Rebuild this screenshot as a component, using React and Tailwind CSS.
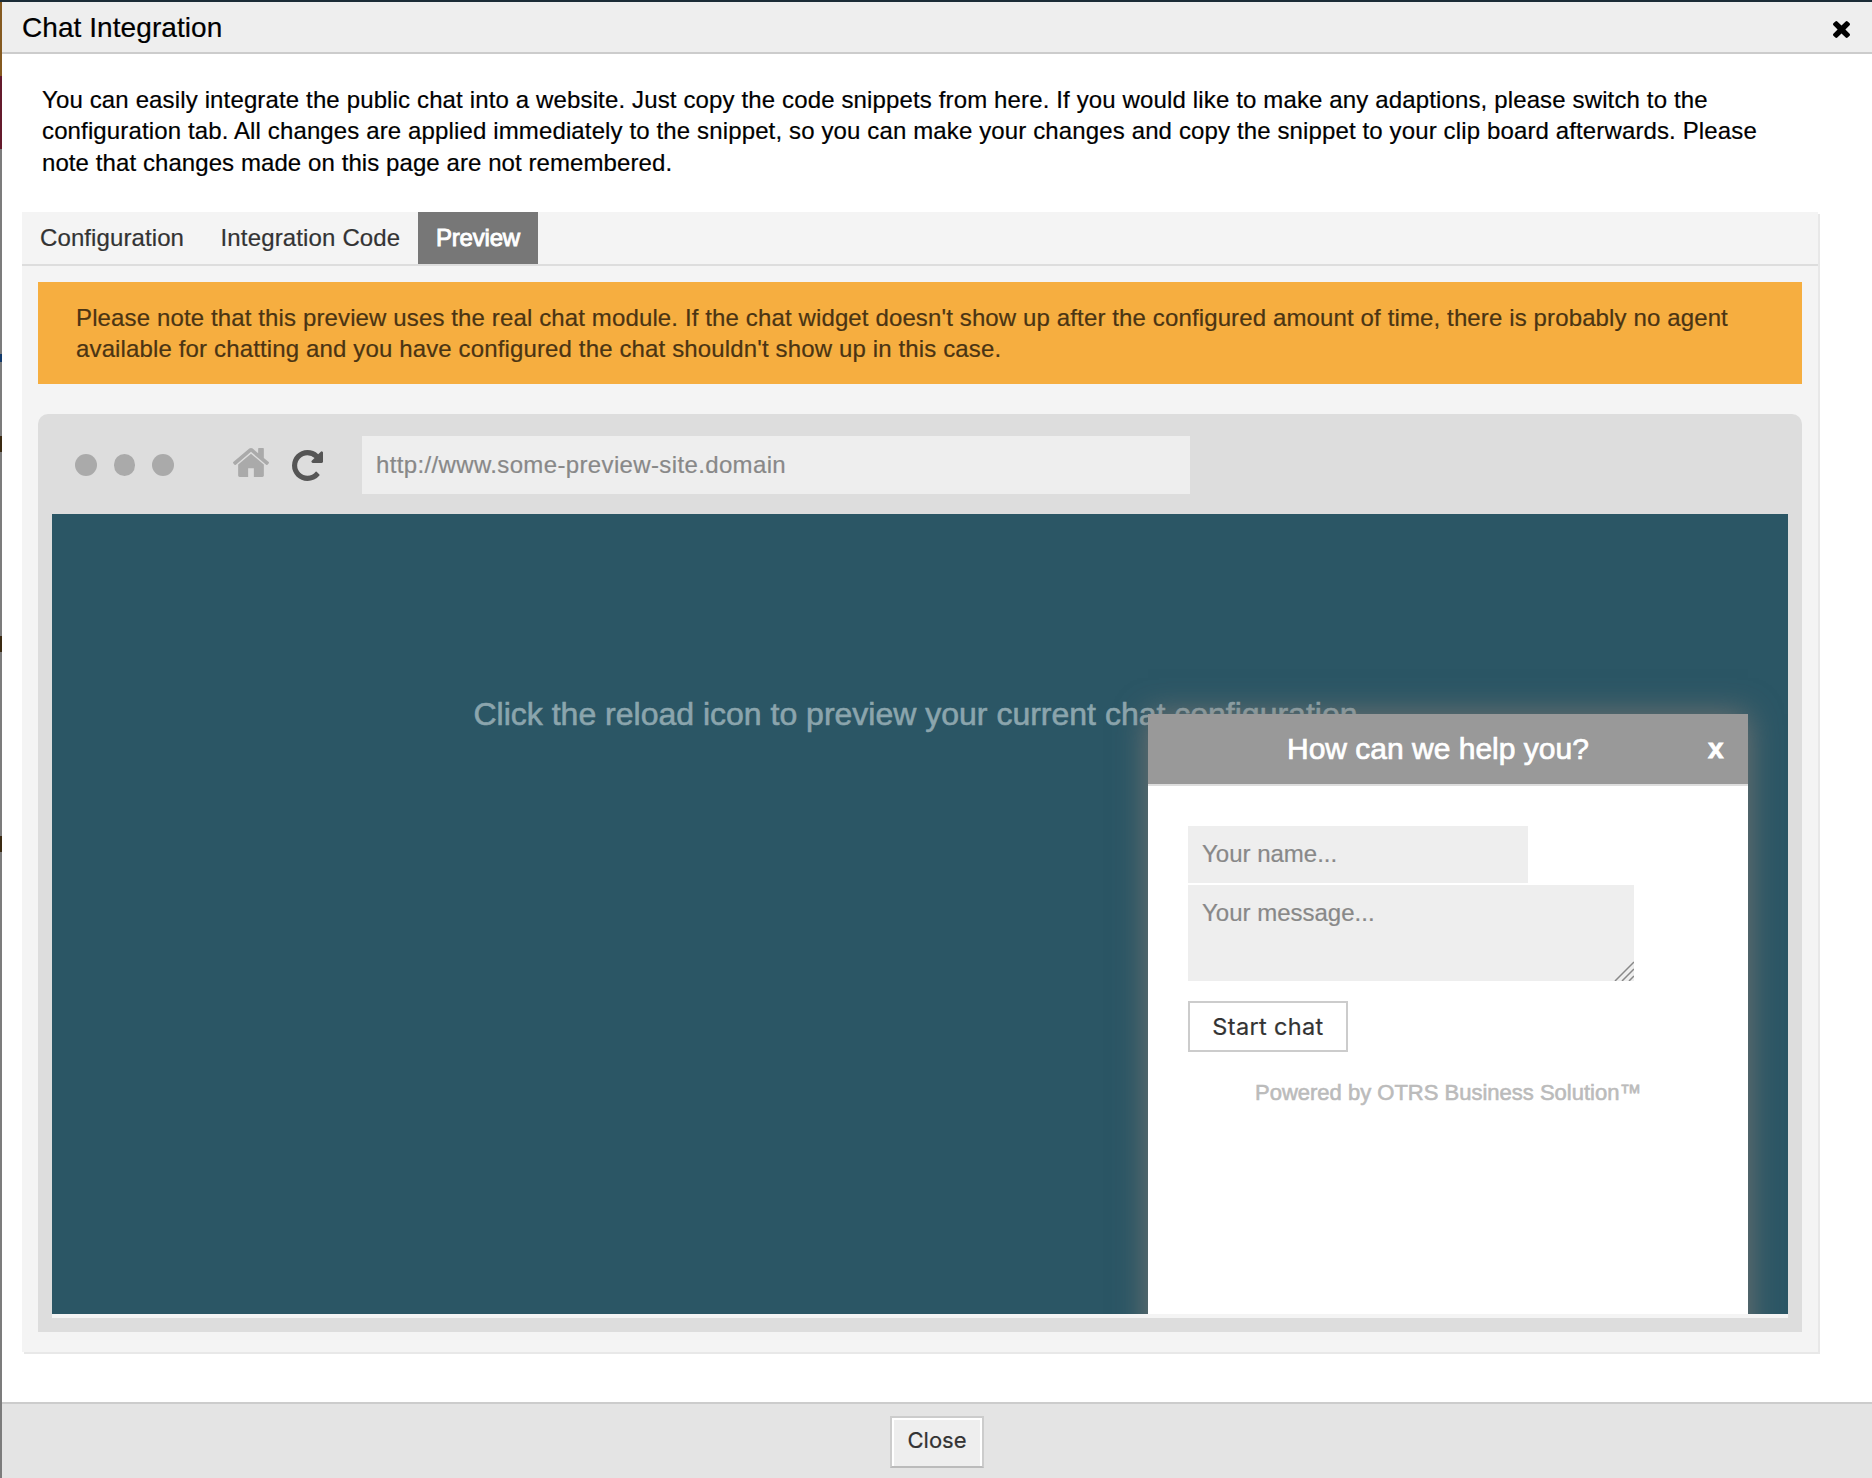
import React from "react";

const TimesIcon = () => (
  <svg className="h-[17px] w-[17px]" viewBox="302 366 1188 1188" fill="currentColor">
    <path d="M1490 1322q0 40-28 68l-136 136q-28 28-68 28t-68-28l-294-294-294 294q-28 28-68 28t-68-28l-136-136q-28-28-28-68t28-68l294-294-294-294q-28-28-28-68t28-68l136-136q28-28 68-28t68 28l294 294 294-294q28-28 68-28t68 28l136 136q28 28 28 68t-28 68l-294 294 294 294q28 28 28 68z" />
  </svg>
);

const HomeIcon = () => (
  <svg className="-mt-[5px] h-[29px] w-9" viewBox="25 253 1614 1284" preserveAspectRatio="none" fill="#aaa">
    <path d="M1408 992v480q0 26-19 45t-45 19h-384v-384h-256v384h-384q-26 0-45-19t-19-45v-480q0-1 .5-3t.5-3l575-474 575 474q1 2 1 6zm223-69l-62 74q-8 9-21 11h-3q-13 0-21-7l-692-577-692 577q-12 8-24 7-13-2-21-11l-62-74q-8-10-7-23.5t11-21.5l719-599q32-26 76-26t76 26l244 204v-195q0-14 9-23t23-9h192q14 0 23 9t9 23v408l219 182q10 8 11 21.5t-7 23.5z" />
  </svg>
);

const ReloadIcon = () => (
  <svg className="h-[31px] w-[31px]" viewBox="128 128 1536 1536" fill="#555">
    <path d="M1664 256v448q0 26-19 45t-45 19h-448q-42 0-59-40-17-39 14-69l138-138q-148-137-349-137-104 0-198.5 40.5t-163.5 109.5-109.5 163.5-40.5 198.5 40.5 198.5 109.5 163.5 163.5 109.5 198.5 40.5q119 0 225-52t179-147q7-10 23-12 15 0 25 9l137 138q9 8 9.5 20.5t-7.5 22.5q-109 132-264 204.5t-327 72.5q-156 0-298-61t-245-164-164-245-61-298 61-298 164-245 245-164 298-61q147 0 284.5 55.5t244.5 156.5l130-129q29-31 70-14 39 17 39 59z" />
  </svg>
);

const ChatWidget = () => (
  <div className="absolute top-[200px] right-10 h-[640px] w-[600px] bg-white shadow-[0_0_30px_rgba(140,125,118,0.75)]">
    <div className="flex h-[72px] items-center border-b-2 border-[#ddd] bg-[#999] text-white">
      <h2 className="ml-[139px] w-[420px] text-[30px] leading-none whitespace-nowrap [-webkit-text-stroke:0.7px_white]">How can we help you?</h2>
      <button className="ml-px text-[28px] leading-none font-bold [-webkit-text-stroke:0.8px_white]">x</button>
    </div>
    <form className="flex flex-col items-start px-10 pt-10 text-2xl text-[#888]">
      <div className="h-[57px] w-[340px] bg-[#eee] pt-3 pl-3.5">Your name...</div>
      <div className="relative mt-0.5 h-24 w-[446px] bg-[#eee] pt-3 pl-3.5">
        Your message...
        <svg className="absolute right-0 bottom-0 h-5 w-5" viewBox="0 0 20 20" stroke="#888" strokeWidth="1.5">
          <path d="M1 20L20 1M8 20L20 8M15 20L20 15" />
        </svg>
      </div>
      <button type="button" className="mt-5 h-[51px] w-40 border-2 border-[#ccc] bg-white pt-px font-['Inter'] text-[23.5px] tracking-[0.35px] text-[#333]">Start chat</button>
      <p className="mt-[26px] ml-[67px] text-[22px] leading-[30px] whitespace-nowrap text-[#bbb] [-webkit-text-stroke:0.6px_#bbb]">Powered by OTRS Business Solution™</p>
    </form>
  </div>
);

export default function App() {
  return (
    <div className="flex h-[1478px] w-[1872px] flex-col overflow-hidden border-t-2 border-[#1b2b36] bg-white font-['Liberation_Sans',sans-serif] text-black [-webkit-text-stroke:0.2px_currentColor]">
      <div className="flex min-h-0 flex-1">
        <div className="flex w-0.5 flex-col bg-[#7c7c7c]">
          <div className="h-[74px] bg-[#855a20]" />
          <div className="h-[73px] bg-[#641a2c]" />
          <div className="mt-[205px] h-2 bg-[#123a6b]" />
          <div className="mt-[74px] h-4 bg-[#3b2a12]" />
          <div className="mt-[184px] h-4 bg-[#3b2a12]" />
          <div className="mt-[184px] h-4 bg-[#3b2a12]" />
        </div>
        <div className="flex flex-1 flex-col">
          <header className="flex h-[52px] items-center justify-between border-b-2 border-[#ccc] bg-[#eee] pr-[22px] pl-5">
            <h1 className="mt-0.5 text-[28px] leading-none tracking-[0.07px]">Chat Integration</h1>
            <button className="mt-1"><TimesIcon /></button>
          </header>

          <main className="h-[1348px] pr-[54px] pl-5">
            <p className="h-[124px] pt-[30px] pl-5 text-2xl leading-[31px] whitespace-nowrap">
              <span className="block tracking-[0.138px]">You can easily integrate the public chat into a website. Just copy the code snippets from here. If you would like to make any adaptions, please switch to the</span>
              <span className="block tracking-[0.13px]">configuration tab. All changes are applied immediately to the snippet, so you can make your changes and copy the snippet to your clip board afterwards. Please</span>
              <span className="block pt-px tracking-[0.08px]">note that changes made on this page are not remembered.</span>
            </p>

            <section className="mt-[34px] h-[1140px] w-[1796px] bg-[#f4f4f4] shadow-[2px_2px_0_#e8e8e8]">
              <nav className="flex h-[54px] border-b-2 border-[#ddd] text-2xl text-[#333]">
                <a className="w-[180px] pt-2.5 pl-[18px] tracking-[0.1px]">Configuration</a>
                <a className="w-[216px] pt-2.5 pl-[18.5px] tracking-[0.15px] whitespace-nowrap">Integration Code</a>
                <a className="w-[120px] bg-[#777] pt-2.5 pl-[18px] tracking-[-0.2px] text-white [-webkit-text-stroke:0.9px_white]">Preview</a>
              </nav>

              <div className="mx-4 mt-4 h-[102px] bg-[#f6ae40] pt-5 pl-[38px] text-2xl leading-[31.2px] whitespace-nowrap text-[#4a3413]">
                <span className="tracking-[0.127px]">Please note that this preview uses the real chat module. If the chat widget doesn't show up after the configured amount of time, there is probably no agent</span><br />
                <span className="tracking-[0.139px]">available for chatting and you have configured the chat shouldn't show up in this case.</span>
              </div>

              <div className="mx-4 mt-[30px] h-[918px] rounded-t-[10px] bg-[#ddd] px-3.5">
                <div className="flex h-[100px] items-center pl-[23px]">
                  <div className="mt-0.5 flex gap-[17px]">
                    <span className="h-[22px] w-[21.6px] rounded-full bg-[#aaa]" />
                    <span className="h-[22px] w-[21.6px] rounded-full bg-[#aaa]" />
                    <span className="h-[22px] w-[21.6px] rounded-full bg-[#aaa]" />
                  </div>
                  <div className="mt-0.5 ml-[59.2px] flex items-center gap-[23px]">
                    <HomeIcon />
                    <ReloadIcon />
                  </div>
                  <div className="mt-0.5 ml-[39px] h-[58px] w-[828px] bg-[#eee] pt-[13px] pl-3.5 text-2xl tracking-[0.36px] text-[#888]">http://www.some-preview-site.domain</div>
                </div>
                <div className="relative h-[800px] overflow-hidden bg-[#2b5665]">
                  <p className="pt-[182px] pl-[421.5px] text-[32px] leading-9 whitespace-nowrap text-[#8ba5ad] [-webkit-text-stroke:0.6px_#8ba5ad]">Click the reload icon to preview your current chat configuration.</p>
                  <ChatWidget />
                </div>
                <div className="h-1 bg-[#f4f4f4]" />
              </div>
            </section>
          </main>

          <footer className="flex flex-1 items-start justify-center border-t-2 border-[#ccc] bg-[#e4e4e4] pt-3">
            <button className="h-[52px] w-[94px] border-2 border-[#ccc] border-b-[#bbb] bg-[#eee] pb-1 font-['Inter'] text-[22px] text-[#333] shadow-[inset_2px_2px_0_#fff,inset_-2px_0_0_#fff]">Close</button>
          </footer>
        </div>
      </div>
    </div>
  );
}
